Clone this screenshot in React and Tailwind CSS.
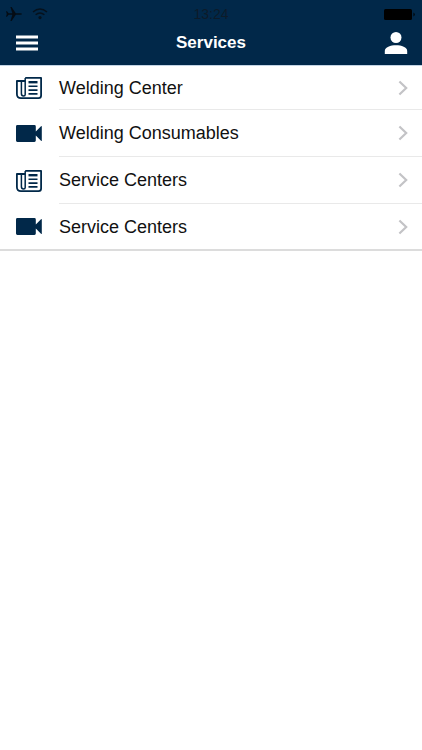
import React from 'react';

const services = [
  { id: 1, title: 'Welding Center', type: 'news' },
  { id: 2, title: 'Welding Consumables', type: 'video' },
  { id: 3, title: 'Service Centers', type: 'news' },
  { id: 4, title: 'Service Centers', type: 'video' },
];

function NewsIcon() {
  return (
    <svg viewBox="0 0 26 22" className="w-[26px] h-[22px]" fill="none" stroke="#012849" strokeWidth="1.8" strokeLinejoin="round" aria-hidden="true">
      <path d="M9.2 0.9H25.1V18.5Q25.1 21.1 22.5 21.1H5Q0.9 21.1 0.9 17V4H9.2" />
      <path d="M9.2 0.9V17.5Q9.2 19 7.6 19Q5.4 19 5.4 16.5V4" strokeWidth="1.5" />
      <path d="M12.5 5.2H21.5" strokeWidth="2.4" />
      <path d="M12.5 9.3H21.5M12.5 13.1H21.5M12.5 16.9H21.5" strokeWidth="1.6" />
    </svg>
  );
}

function VideoIcon() {
  return (
    <svg viewBox="0 0 26 17" className="w-[26px] h-[17px]" fill="#012849" aria-hidden="true">
      <path d="M1.4 0H18.4Q19.8 0 19.8 1.4V6.6L25 1.2Q25.8 0.6 25.8 1.6V15.4Q25.8 16.4 25 15.8L19.8 10.4V15.6Q19.8 17 18.4 17H1.4Q0 17 0 15.6V1.4Q0 0 1.4 0Z" />
    </svg>
  );
}

function StatusBar() {
  return (
    <div className="grid grid-cols-3 items-center h-7 px-1.5 text-black">
      <div className="flex items-center gap-2.5">
        <svg viewBox="0 0 16 16" className="w-4 h-4" fill="#050c14" aria-hidden="true">
          <path d="M0 5.2H1L2.6 7.2H6.4L4.4 1H5.6L9.8 7.2H14Q16 7.3 16 8T14 8.8H9.8L5.6 15H4.4L6.4 8.8H2.6L1 10.8H0L0.8 8Z" />
        </svg>
        <svg viewBox="0 0 16 12" className="w-4 h-3" fill="none" stroke="#06111c" strokeWidth="1.4" aria-hidden="true">
          <path d="M1 4Q8 -2 15 4" />
          <path d="M3.6 6.8Q8 3 12.4 6.8" />
          <circle cx="8" cy="9.6" r="1.6" fill="#06111c" stroke="none" />
        </svg>
      </div>
      <span className="text-center text-sm text-[#0d1b29]">13:24</span>
      <svg viewBox="0 0 32 11" className="w-8 h-[11px] justify-self-end" fill="currentColor" aria-hidden="true">
        <rect width="28" height="11" rx="1.5" />
        <path d="M29.5 3.5Q32 5.5 29.5 7.5Z" />
      </svg>
    </div>
  );
}

function App() {
  return (
    <div className="min-h-screen bg-white font-['Liberation_Sans',Arial,sans-serif]">
      <header className="bg-[#012849] border-b border-[#c3d4e4]">
        <StatusBar />
        <div className="grid grid-cols-3 items-center h-[37px] px-3.5 pb-2">
          <button type="button" aria-label="Menu" className="p-0.5 justify-self-start">
            <svg viewBox="0 0 22 16" className="w-[22px] h-4" fill="#fff" aria-hidden="true">
              <path d="M0 0.5H22V3.5H0ZM0 6.5H22V9.5H0ZM0 12.5H22V15.5H0Z" />
            </svg>
          </button>
          <h1 className="text-[17px] font-bold text-white text-center leading-6">Services</h1>
          <button type="button" aria-label="Profile" className="justify-self-end">
            <svg viewBox="0 0 24 22" className="w-6 h-[22px]" fill="#fff" aria-hidden="true">
              <circle cx="12" cy="5.5" r="5.5" />
              <path d="M0.8 22V19C0.8 15.2 6.5 13.3 12 13.3S23.2 15.2 23.2 19V22Z" />
            </svg>
          </button>
        </div>
      </header>
      <main>
        <ul className="border-b-2 border-[#dcdcdc]">
          {services.map((service) => (
            <li key={service.id} className="group">
              <a href="#" className="flex items-center h-[47px] group-first:h-11 group-last:h-[45px] pl-4 text-lg text-[#111111]">
                <span className="w-[43px]">
                  {service.type === 'news' ? <NewsIcon /> : <VideoIcon />}
                </span>
                <span className="flex flex-1 items-center justify-between h-full pr-3.5 border-b border-[#e9e9e9] group-last:border-b-0">
                  {service.title}
                  <svg viewBox="0 0 10 16" className="w-2.5 h-4" fill="none" stroke="#c3c3c6" strokeWidth="2.2" aria-hidden="true">
                    <path d="M1.4 1.5L8.2 8L1.4 14.5" />
                  </svg>
                </span>
              </a>
            </li>
          ))}
        </ul>
      </main>
    </div>
  );
}

export default App;
